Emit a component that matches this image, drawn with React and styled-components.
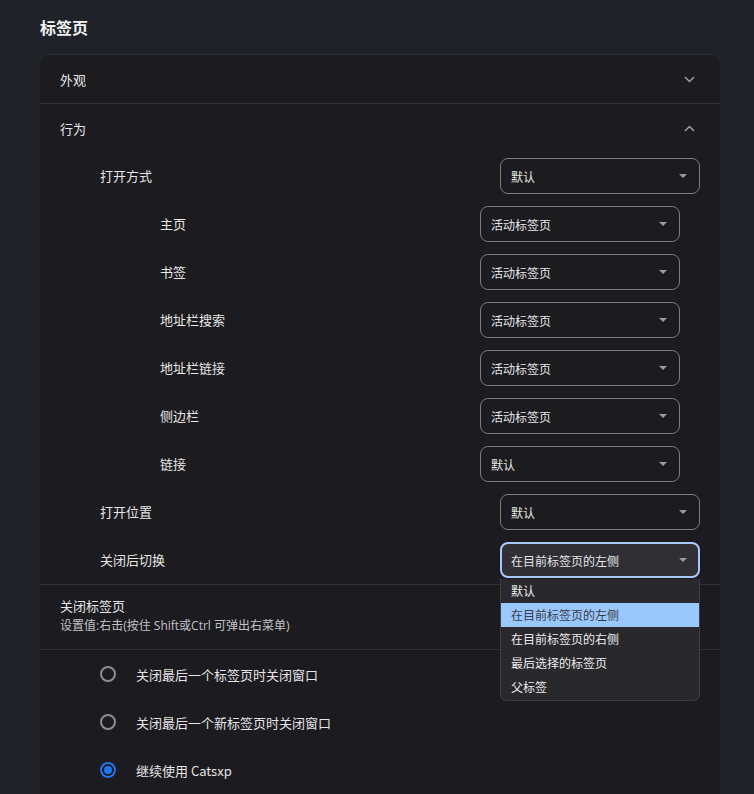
import React from "react";
import styled, { createGlobalStyle, css } from "styled-components";

const GlobalStyle = createGlobalStyle`
  html, body {
    margin: 0;
    padding: 0;
    background: #202229;
  }
  body {
    font-family: "Noto Sans CJK SC", "Noto Sans", "Liberation Sans", sans-serif;
    color: #e3e3e3;
    -webkit-font-smoothing: antialiased;
  }
  * { box-sizing: border-box; }
`;

const Page = styled.div`
  padding: 16px 34px 0 40px;
  height: 794px;
  overflow: hidden;
`;

const Title = styled.h1`
  margin: 0 0 16px;
  font-size: 16px;
  line-height: 22px;
  font-weight: 700;
  color: #f1f1f1;
`;

const Card = styled.div`
  background: #1c1b1f;
  border-radius: 8px 8px 0 0;
  border-top: 1px solid #2e2e33;
`;

const SectionHeader = styled.div`
  height: 48px;
  display: flex;
  align-items: center;
  justify-content: space-between;
  padding: 0 25px 0 20px;
  font-size: 13px;
  color: #e6e6e6;
`;

const Chevron = styled.svg`
  width: 11px;
  height: 7px;
  display: block;
`;

const Row = styled.div`
  height: 48px;
  display: flex;
  align-items: center;
  justify-content: space-between;
  padding: ${(p) => (p.$nested ? "0 40px 0 120px" : "0 20px 0 60px")};
  font-size: 13px;
  color: #e6e6e6;
`;

const Label = styled.span`
  line-height: 20px;
`;

const SelectWrap = styled.div`
  position: relative;
  width: 200px;
`;

const SelectBox = styled.div`
  height: 36px;
  display: flex;
  align-items: center;
  justify-content: space-between;
  padding: 0 12px 0 10px;
  border-radius: 8px;
  font-size: 12px;
  color: #e6e6e6;
  border: 1px solid #7b7b80;
  background: transparent;
  ${(p) =>
    p.$focused &&
    css`
      border: 2px solid #a8c7fa;
      padding: 0 11px 0 9px;
      background: #302f35;
    `}
`;

const Caret = styled.span`
  width: 0;
  height: 0;
  border-left: 4px solid transparent;
  border-right: 4px solid transparent;
  border-top: 4px solid #9c9ca0;
`;

const Menu = styled.div`
  position: absolute;
  top: 100%;
  left: 0;
  width: 200px;
  margin-top: 1px;
  background: #29292d;
  border: 1px solid #3d3d42;
  border-top: none;
  border-radius: 0 0 7px 7px;
  padding-bottom: 1px;
  z-index: 10;
`;

const MenuItem = styled.div`
  height: 24px;
  line-height: 24px;
  padding-left: 10px;
  font-size: 12px;
  color: ${(p) => (p.$active ? "#3c3c44" : "#ececec")};
  background: ${(p) => (p.$active ? "#99c8ff" : "transparent")};
`;

const Divider = styled.div`
  height: 1px;
  background: #333338;
`;

const InfoBlock = styled.div`
  padding: 11px 20px 13px;
`;

const InfoTitle = styled.div`
  font-size: 13px;
  line-height: 20px;
  color: #e6e6e6;
`;

const InfoSub = styled.div`
  font-family: "Open Sans", "Noto Sans CJK SC", sans-serif;
  font-size: 12px;
  line-height: 20px;
  color: #c2c2c6;
`;

const RadioRow = styled.div`
  height: 48px;
  display: flex;
  align-items: center;
  gap: 20px;
  padding-left: 60px;
  font-size: 13px;
  color: #e6e6e6;
`;

const RadioCircle = styled.span`
  width: 16px;
  height: 16px;
  border-radius: 50%;
  border: 2px solid ${(p) => (p.$checked ? "#1f74f0" : "#8e8e92")};
  display: flex;
  align-items: center;
  justify-content: center;
  &::after {
    content: "";
    width: 8px;
    height: 8px;
    border-radius: 50%;
    background: ${(p) => (p.$checked ? "#1f74f0" : "transparent")};
  }
`;

const ChevronIcon = ({ up }) => (
  <Chevron viewBox="0 0 11 7">
    <path
      d={up ? "M1 6 L5.5 1.5 L10 6" : "M1 1 L5.5 5.5 L10 1"}
      fill="none"
      stroke="#a0a0a4"
      strokeWidth="1.5"
    />
  </Chevron>
);

const Select = ({ value, focused, options, active }) => (
  <SelectWrap>
    <SelectBox $focused={focused}>
      <span>{value}</span>
      <Caret />
    </SelectBox>
    {options && (
      <Menu>
        {options.map((o) => (
          <MenuItem key={o} $active={o === active}>
            {o}
          </MenuItem>
        ))}
      </Menu>
    )}
  </SelectWrap>
);

const rows = [
  { label: "打开方式", value: "默认" },
  { label: "主页", value: "活动标签页", nested: true },
  { label: "书签", value: "活动标签页", nested: true },
  { label: "地址栏搜索", value: "活动标签页", nested: true },
  { label: "地址栏链接", value: "活动标签页", nested: true },
  { label: "侧边栏", value: "活动标签页", nested: true },
  { label: "链接", value: "默认", nested: true },
  { label: "打开位置", value: "默认" },
];

const menuOptions = [
  "默认",
  "在目前标签页的左侧",
  "在目前标签页的右侧",
  "最后选择的标签页",
  "父标签",
];

const radios = [
  { label: "关闭最后一个标签页时关闭窗口", checked: false },
  { label: "关闭最后一个新标签页时关闭窗口", checked: false },
  { label: "继续使用 Catsxp", checked: true },
];

export default function App() {
  return (
    <>
      <GlobalStyle />
      <Page>
        <Title>标签页</Title>
        <Card>
          <SectionHeader>
            <span>外观</span>
            <ChevronIcon />
          </SectionHeader>
          <Divider />
          <SectionHeader>
            <span>行为</span>
            <ChevronIcon up />
          </SectionHeader>
          {rows.map((r) => (
            <Row key={r.label} $nested={r.nested}>
              <Label>{r.label}</Label>
              <Select value={r.value} />
            </Row>
          ))}
          <Row>
            <Label>关闭后切换</Label>
            <Select
              value="在目前标签页的左侧"
              focused
              options={menuOptions}
              active="在目前标签页的左侧"
            />
          </Row>
          <Divider />
          <InfoBlock>
            <InfoTitle>关闭标签页</InfoTitle>
            <InfoSub>设置值:右击(按住 Shift或Ctrl 可弹出右菜单)</InfoSub>
          </InfoBlock>
          <Divider />
          {radios.map((r) => (
            <RadioRow key={r.label}>
              <RadioCircle $checked={r.checked} />
              <span>{r.label}</span>
            </RadioRow>
          ))}
        </Card>
      </Page>
    </>
  );
}
